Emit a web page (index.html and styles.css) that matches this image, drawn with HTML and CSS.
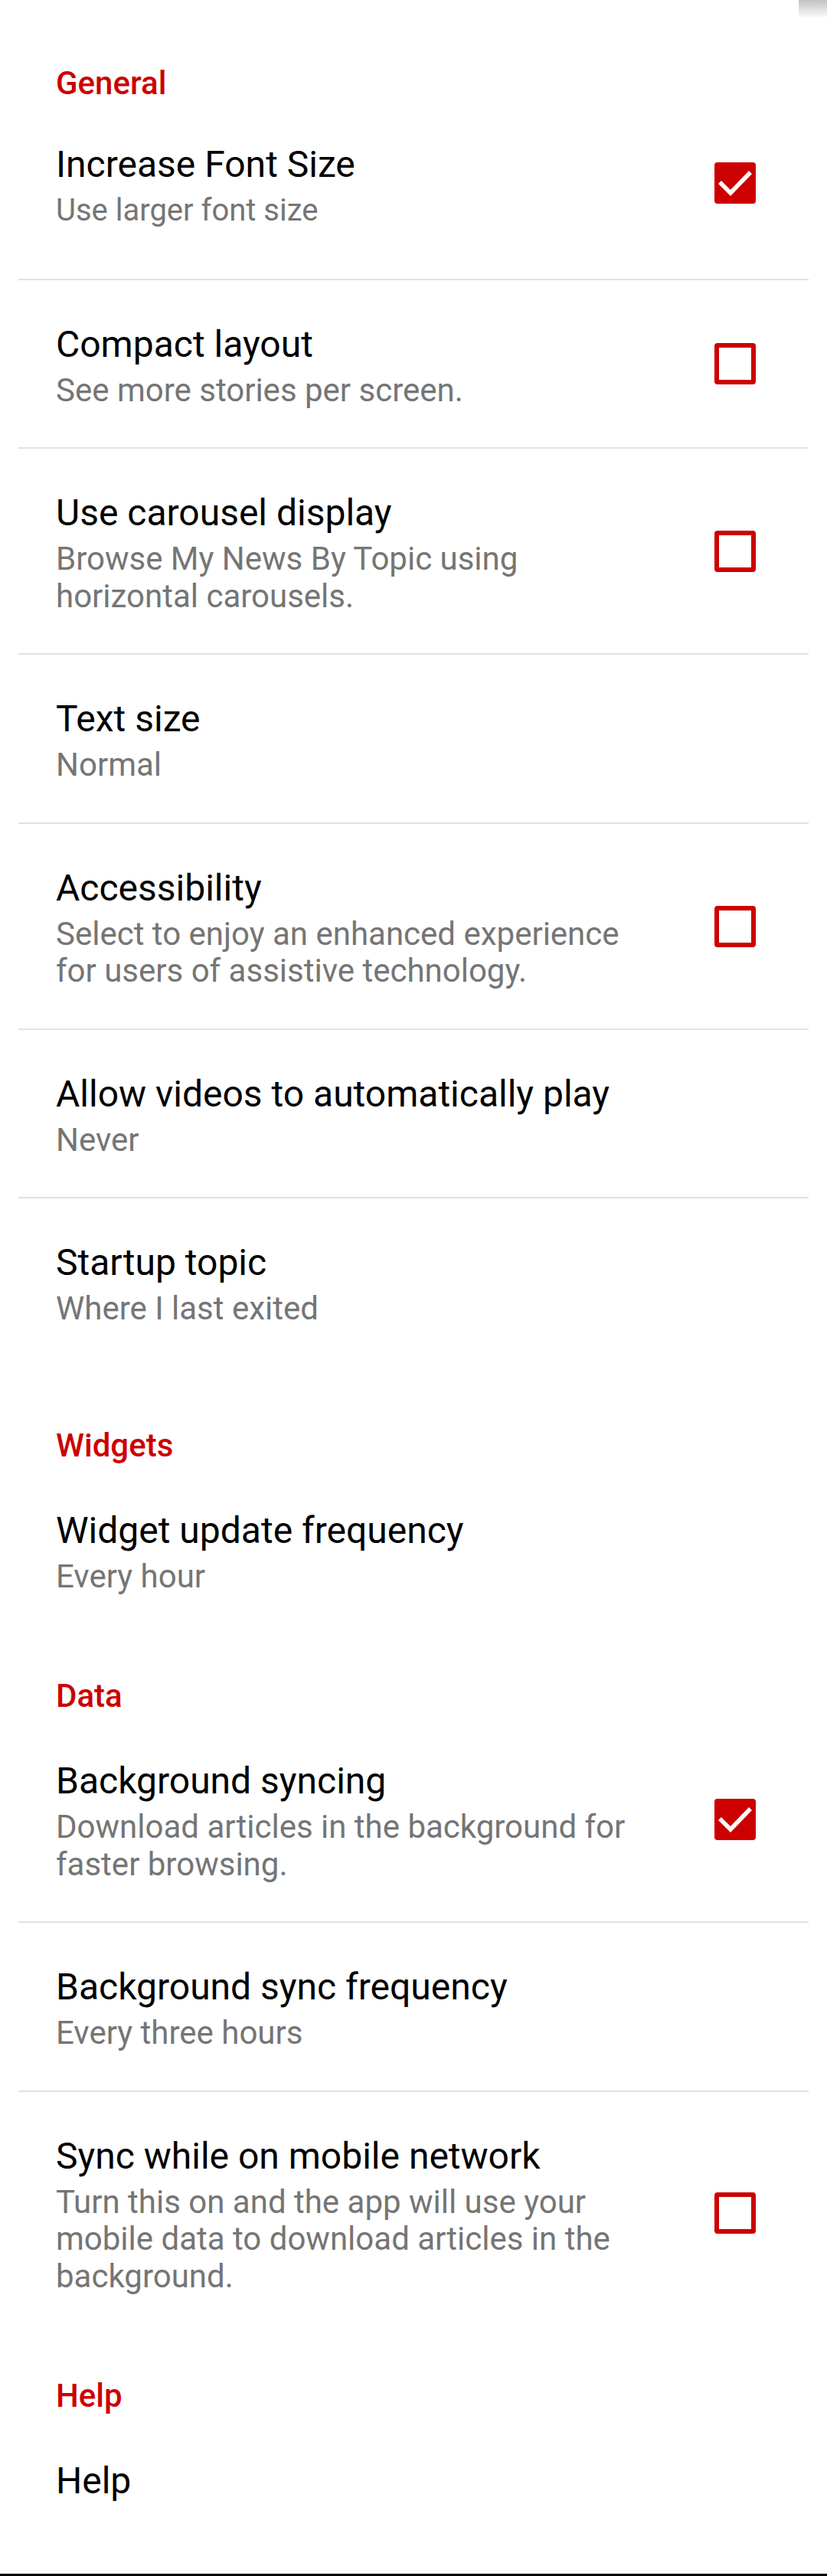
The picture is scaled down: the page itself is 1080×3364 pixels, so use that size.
FILE: index.html
```html
<!DOCTYPE html>
<html lang="en">
<head>
<meta charset="utf-8">
<title>Settings</title>
<link rel="stylesheet" href="styles.css">
</head>
<body>
<div class="page">
  <div class="scroll-shade"></div>

  <section class="category category--first">
    <h2 class="category-title">General</h2>
    <div class="pref pref--custom pref--divider">
      <div class="pref-text">
        <div class="pref-title">Increase Font Size</div>
        <div class="pref-summary pref-summary--small">Use larger font size</div>
      </div>
      <span class="checkbox checkbox--on checkbox--raised">
        <svg viewBox="0 0 54 54" width="54" height="54" aria-hidden="true"><rect x="0" y="0" width="54" height="54" rx="4" fill="#cc0000"/><polyline points="7,26 21,40 47,13" fill="none" stroke="#ffffff" stroke-width="5.5"/></svg>
      </span>
    </div>
    <div class="pref pref--divider">
      <div class="pref-text">
        <div class="pref-title">Compact layout</div>
        <div class="pref-summary">See more stories per screen.</div>
      </div>
      <span class="checkbox"></span>
    </div>
    <div class="pref pref--divider">
      <div class="pref-text">
        <div class="pref-title">Use carousel display</div>
        <div class="pref-summary">Browse My News By Topic using horizontal carousels.</div>
      </div>
      <span class="checkbox"></span>
    </div>
    <div class="pref pref--divider">
      <div class="pref-text">
        <div class="pref-title">Text size</div>
        <div class="pref-summary">Normal</div>
      </div>
    </div>
    <div class="pref pref--divider">
      <div class="pref-text">
        <div class="pref-title">Accessibility</div>
        <div class="pref-summary">Select to enjoy an enhanced experience for users of assistive technology.</div>
      </div>
      <span class="checkbox"></span>
    </div>
    <div class="pref pref--divider">
      <div class="pref-text">
        <div class="pref-title">Allow videos to automatically play</div>
        <div class="pref-summary">Never</div>
      </div>
    </div>
    <div class="pref">
      <div class="pref-text">
        <div class="pref-title">Startup topic</div>
        <div class="pref-summary">Where I last exited</div>
      </div>
    </div>
  </section>

  <section class="category category--wide-gap">
    <h2 class="category-title">Widgets</h2>
    <div class="pref">
      <div class="pref-text">
        <div class="pref-title">Widget update frequency</div>
        <div class="pref-summary">Every hour</div>
      </div>
    </div>
  </section>

  <section class="category">
    <h2 class="category-title">Data</h2>
    <div class="pref pref--divider">
      <div class="pref-text">
        <div class="pref-title">Background syncing</div>
        <div class="pref-summary">Download articles in the background for faster browsing.</div>
      </div>
      <span class="checkbox checkbox--on">
        <svg viewBox="0 0 54 54" width="54" height="54" aria-hidden="true"><rect x="0" y="0" width="54" height="54" rx="4" fill="#cc0000"/><polyline points="7,26 21,40 47,13" fill="none" stroke="#ffffff" stroke-width="5.5"/></svg>
      </span>
    </div>
    <div class="pref pref--divider">
      <div class="pref-text">
        <div class="pref-title">Background sync frequency</div>
        <div class="pref-summary">Every three hours</div>
      </div>
    </div>
    <div class="pref">
      <div class="pref-text">
        <div class="pref-title">Sync while on mobile network</div>
        <div class="pref-summary">Turn this on and the app will use your mobile data to download articles in the background.</div>
      </div>
      <span class="checkbox"></span>
    </div>
  </section>

  <section class="category">
    <h2 class="category-title">Help</h2>
    <div class="pref pref--single">
      <div class="pref-text">
        <div class="pref-title">Help</div>
      </div>
    </div>
  </section>

  <div class="nav-edge"></div>
</div>
</body>
</html>
```

FILE: styles.css
```css
html, body {
  margin: 0;
  padding: 0;
  background: #ffffff;
}

body {
  font-family: Roboto, "Noto Sans", "Liberation Sans", sans-serif;
  color: #000000;
}

.page {
  position: relative;
  min-height: 100vh;
  display: flex;
  flex-direction: column;
}

.scroll-shade {
  position: absolute;
  top: 0;
  right: 0;
  width: 37px;
  height: 24px;
  background: linear-gradient(to bottom, #c2c2c2 0%, #e6e6e6 60%, #ffffff 100%);
}

.category {
  display: flex;
  flex-direction: column;
  margin-top: 57px;
}

.category--first {
  margin-top: 84px;
}

.category--wide-gap {
  margin-top: 79px;
}

.category-title {
  margin: 0 0 3px 0;
  padding-left: 73px;
  font-size: 42px;
  line-height: 49px;
  font-weight: 500;
  color: #cc0000;
}

.pref {
  display: flex;
  align-items: center;
  margin: 0 24px;
  padding: 56px 69px 50px 49px;
}

.pref--divider {
  border-bottom: 2px solid #e2e2e2;
}

.pref--custom {
  padding-top: 51px;
  padding-bottom: 64px;
}

.pref-text {
  flex: 1 1 auto;
  display: flex;
  flex-direction: column;
  gap: 8px;
  margin-right: 93px;
}

.pref-title {
  font-size: 48px;
  line-height: 56px;
  color: #000000;
}

.pref-summary {
  font-size: 42px;
  line-height: 48.5px;
  color: #757575;
}

.pref-summary--small {
  font-size: 40px;
}

.checkbox {
  flex: 0 0 54px;
  width: 54px;
  height: 54px;
  box-sizing: border-box;
  border: 6px solid #cc0000;
  border-radius: 4px;
  margin-bottom: 5px;
}

.checkbox--on {
  border: none;
  display: block;
}

.checkbox--on svg {
  display: block;
}

.checkbox--raised {
  margin-bottom: 8px;
}

.nav-edge {
  margin-top: auto;
  height: 3px;
  background: #000000;
}
```
